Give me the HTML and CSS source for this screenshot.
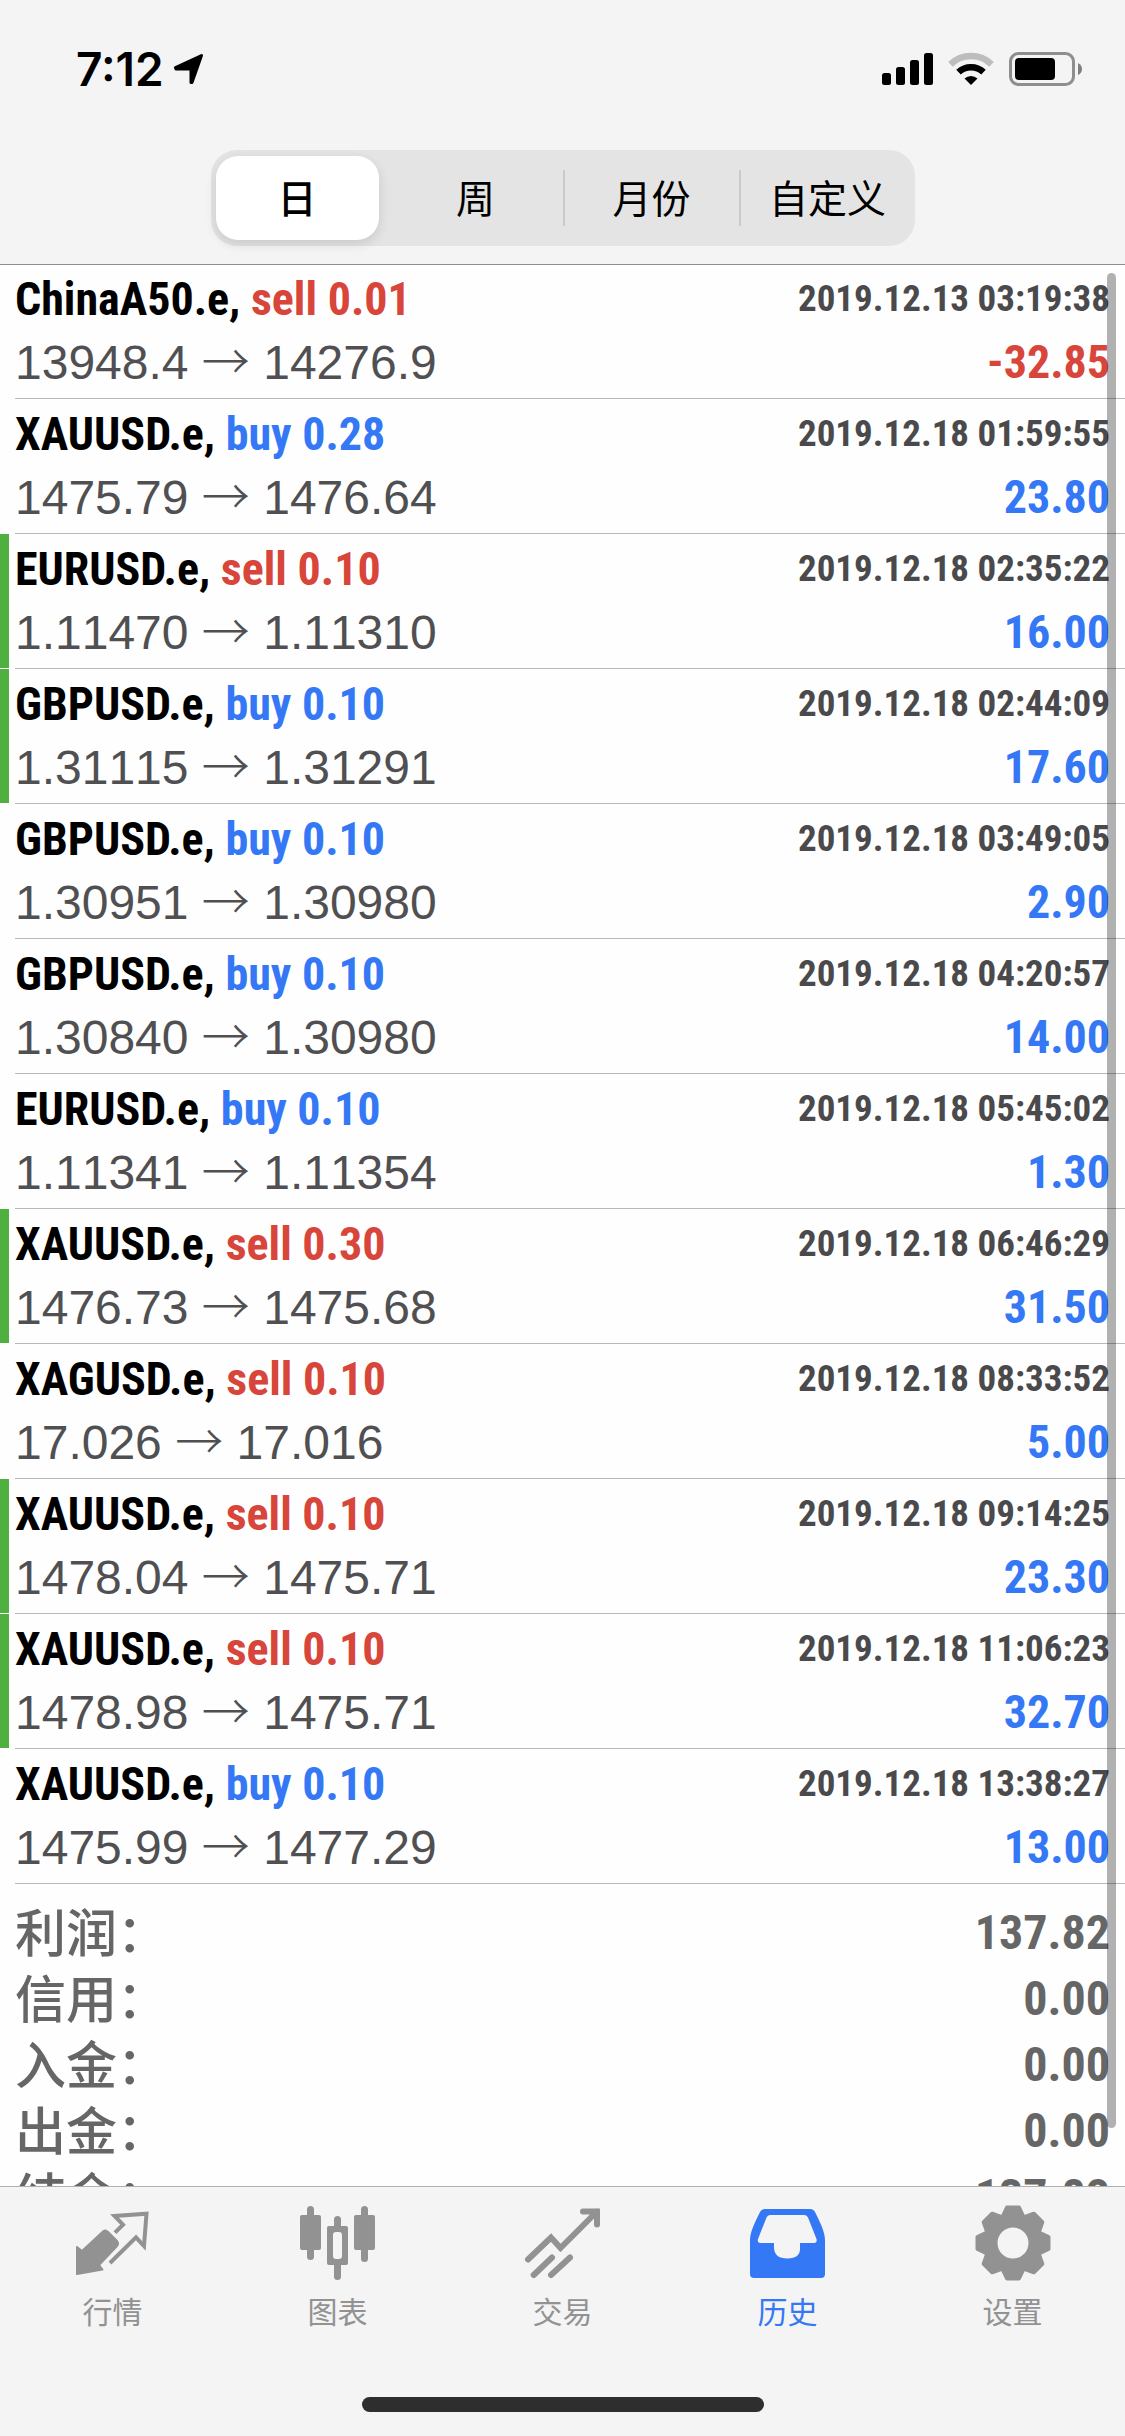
FILE: index.html
```
<!DOCTYPE html>
<html lang="zh-CN">
<head>
<meta charset="utf-8">
<meta name="viewport" content="width=device-width">
<title>历史</title>
<link rel="stylesheet" href="styles.css">
</head>
<body>
<header class="top">
  <div class="status">
    <div class="clock">
      <span>7:12</span>
      <svg width="30" height="32" viewBox="0 0 30 32" aria-hidden="true"><path d="M1.500 14.500 27.500 2.500 18 29.500H17V16H2Z" fill="#000" stroke="#000" stroke-width="3" stroke-linejoin="round"/></svg>
    </div>
    <svg width="201" height="34" viewBox="0 0 201 34" aria-hidden="true">
      <rect x="0" y="21" width="9" height="12" rx="2.500"/>
      <rect x="14" y="15" width="9" height="18" rx="2.500"/>
      <rect x="28" y="8" width="9" height="25" rx="2.500"/>
      <rect x="42" y="1" width="9" height="32" rx="2.500"/>
      <path d="M68.500 12.300A29.500 29.500 0 0 1 109.500 12.300" fill="none" stroke="#bdbdbd" stroke-width="6.500"/>
      <path d="M76.500 20.200A18 18 0 0 1 101.500 20.200" fill="none" stroke="#000" stroke-width="6.500"/>
      <path d="M82.500 26.500A9.500 9.500 0 0 1 95.500 26.500L89 33Z"/>
      <rect x="128.500" y="1.500" width="63" height="31" rx="8" fill="none" stroke="#8e8e8e" stroke-width="3"/>
      <rect x="133" y="6" width="40" height="22" rx="4"/>
      <path d="M196 11Q200 13 200 17T196 23Z" fill="#7f7f7f"/>
    </svg>
  </div>
  <nav class="segments" aria-label="周期">
    <button class="segment active" type="button">日</button>
    <button class="segment" type="button">周</button>
    <button class="segment" type="button">月份</button>
    <button class="segment" type="button">自定义</button>
  </nav>
</header>

<main class="history">
  <ul class="deals">
    <li class="deal"><div class="body"><h2>ChinaA50.e, <span class="red">sell 0.01</span></h2><time>2019.12.13 03:19:38</time><p>13948.4 <i>→</i> 14276.9</p><b class="red">-32.85</b></div></li>
    <li class="deal"><div class="body"><h2>XAUUSD.e, <span class="blue">buy 0.28</span></h2><time>2019.12.18 01:59:55</time><p>1475.79 <i>→</i> 1476.64</p><b class="blue">23.80</b></div></li>
    <li class="deal marked"><div class="body"><h2>EURUSD.e, <span class="red">sell 0.10</span></h2><time>2019.12.18 02:35:22</time><p>1.11470 <i>→</i> 1.11310</p><b class="blue">16.00</b></div></li>
    <li class="deal marked"><div class="body"><h2>GBPUSD.e, <span class="blue">buy 0.10</span></h2><time>2019.12.18 02:44:09</time><p>1.31115 <i>→</i> 1.31291</p><b class="blue">17.60</b></div></li>
    <li class="deal"><div class="body"><h2>GBPUSD.e, <span class="blue">buy 0.10</span></h2><time>2019.12.18 03:49:05</time><p>1.30951 <i>→</i> 1.30980</p><b class="blue">2.90</b></div></li>
    <li class="deal"><div class="body"><h2>GBPUSD.e, <span class="blue">buy 0.10</span></h2><time>2019.12.18 04:20:57</time><p>1.30840 <i>→</i> 1.30980</p><b class="blue">14.00</b></div></li>
    <li class="deal"><div class="body"><h2>EURUSD.e, <span class="blue">buy 0.10</span></h2><time>2019.12.18 05:45:02</time><p>1.11341 <i>→</i> 1.11354</p><b class="blue">1.30</b></div></li>
    <li class="deal marked"><div class="body"><h2>XAUUSD.e, <span class="red">sell 0.30</span></h2><time>2019.12.18 06:46:29</time><p>1476.73 <i>→</i> 1475.68</p><b class="blue">31.50</b></div></li>
    <li class="deal"><div class="body"><h2>XAGUSD.e, <span class="red">sell 0.10</span></h2><time>2019.12.18 08:33:52</time><p>17.026 <i>→</i> 17.016</p><b class="blue">5.00</b></div></li>
    <li class="deal marked"><div class="body"><h2>XAUUSD.e, <span class="red">sell 0.10</span></h2><time>2019.12.18 09:14:25</time><p>1478.04 <i>→</i> 1475.71</p><b class="blue">23.30</b></div></li>
    <li class="deal marked"><div class="body"><h2>XAUUSD.e, <span class="red">sell 0.10</span></h2><time>2019.12.18 11:06:23</time><p>1478.98 <i>→</i> 1475.71</p><b class="blue">32.70</b></div></li>
    <li class="deal"><div class="body"><h2>XAUUSD.e, <span class="blue">buy 0.10</span></h2><time>2019.12.18 13:38:27</time><p>1475.99 <i>→</i> 1477.29</p><b class="blue">13.00</b></div></li>
  </ul>
  <dl class="summary">
    <div><dt>利润：</dt><dd>137.82</dd></div>
    <div><dt>信用：</dt><dd>0.00</dd></div>
    <div><dt>入金：</dt><dd>0.00</dd></div>
    <div><dt>出金：</dt><dd>0.00</dd></div>
    <div><dt>结余：</dt><dd>137.82</dd></div>
  </dl>
  <div class="scrollbar"></div>
</main>

<footer class="bottom">
  <nav class="tabs">
    <a class="tab" href="#quotes">
      <svg width="80" height="80" viewBox="0 0 80 80" aria-hidden="true">
        <path d="M4 43 9 47 30 27.500Q32.500 25.500 35 28L44 37Q46 39.500 44 42L26 61 29.500 65.500 4 70Z" fill="currentColor" stroke="currentColor" stroke-width="2" stroke-linejoin="round"/>
        <path d="M42 28.700 50 20.700 41.500 12 73.500 9.700 71 42 63 33.300 37 59" fill="none" stroke="currentColor" stroke-width="4"/>
      </svg>
      <span>行情</span>
    </a>
    <a class="tab" href="#chart">
      <svg width="80" height="80" viewBox="0 0 80 80" aria-hidden="true">
        <g fill="currentColor">
          <rect x="2" y="11" width="21" height="35" rx="2"/><rect x="9" y="2" width="7" height="54" rx="3.500"/>
          <rect x="56" y="11" width="21" height="35" rx="2"/><rect x="63" y="2" width="7" height="56" rx="3.500"/>
          <path fill-rule="evenodd" d="M31 22H48Q50 22 50 24V59Q50 61 48 61H31Q29 61 29 59V24Q29 22 31 22ZM38 28Q35 28 35 31V52Q35 55 38 55H41Q44 55 44 52V31Q44 28 41 28Z"/>
          <path d="M36 24V15.500A3.500 3.500 0 0 1 43 15.500V24ZM36 60V72.500A3.500 3.500 0 0 0 43 72.500V60Z"/>
        </g>
      </svg>
      <span>图表</span>
    </a>
    <a class="tab" href="#trade">
      <svg width="80" height="80" viewBox="0 0 80 80" aria-hidden="true">
        <path d="M5 55.500 28 33.500 37.500 44 74 7.500M60 7.500H74V20.500M10.700 71 29 53.500M28 71 47 53.500" fill="none" stroke="currentColor" stroke-width="6" stroke-linecap="round"/>
      </svg>
      <span>交易</span>
    </a>
    <a class="tab current" href="#history">
      <svg width="80" height="80" viewBox="0 0 80 80" aria-hidden="true">
        <path fill="currentColor" fill-rule="evenodd" d="M17 5H62Q65.500 5 67 8C72 18 77 28 77 36V70Q77 74 73 74H6Q2 74 2 70V36C2 28 7 18 12 8Q13.500 5 17 5ZM22 11Q19.500 11 18.500 13.500L10 35Q9 39 12.500 39H26V43Q26 54.500 39.500 54.500T52 43V39H66Q69.500 39 68.500 35L60 13.500Q59 11 56.500 11Z"/>
      </svg>
      <span>历史</span>
    </a>
    <a class="tab" href="#settings">
      <svg width="80" height="80" viewBox="0 0 80 80" aria-hidden="true">
        <g transform="translate(40 39)" fill="currentColor" stroke="currentColor">
          <circle r="22.500" fill="none" stroke-width="14"/>
          <g stroke-width="4" stroke-linejoin="round">
            <path id="tooth" d="M-11 -25 -6 -35.500H6L11 -25Z"/>
            <use href="#tooth" transform="rotate(45)"/><use href="#tooth" transform="rotate(90)"/>
            <use href="#tooth" transform="rotate(135)"/><use href="#tooth" transform="rotate(180)"/>
            <use href="#tooth" transform="rotate(225)"/><use href="#tooth" transform="rotate(270)"/>
            <use href="#tooth" transform="rotate(315)"/>
          </g>
        </g>
      </svg>
      <span>设置</span>
    </a>
  </nav>
  <div class="home"></div>
</footer>
</body>
</html>
```
FILE: styles.css
```
* {
  box-sizing: border-box;
  margin: 0;
  padding: 0;
}

body {
  display: flex;
  flex-direction: column;
  height: 100vh;
  background: #fefefe;
  color: #000;
  font-family: "Liberation Sans", "Noto Sans CJK SC", sans-serif;
}

.top {
  position: relative;
  z-index: 1;
  padding-bottom: 18px;
  background: #f4f4f4;
  box-shadow: 0 1px #8c8c8c;
}

.status {
  display: flex;
  align-items: center;
  justify-content: space-between;
  height: 138px;
  margin-bottom: 12px;
  padding: 0 42px 0 76px;
}

.clock {
  display: flex;
  align-items: center;
  gap: 10px;
  font: 600 46px/48px Inter, sans-serif;
}

.segments {
  display: grid;
  grid-template-columns: repeat(4, 1fr);
  width: 704px;
  max-width: 100%;
  height: 96px;
  margin: 0 auto;
  border-radius: 26px;
  background: #e4e4e4;
}

.segment {
  margin: 20px 0;
  padding-bottom: 4px;
  border: 0;
  border-left: 2px solid #cacaca;
  background: none;
  color: #000;
  font: 400 39px/52px "Noto Sans CJK SC", sans-serif;
}

.segment.active {
  margin: 6px 8px 6px 5px;
  border: 0;
  border-radius: 22px;
  background: #fff;
  box-shadow: 0 4px 12px rgba(0, 0, 0, 0.12);
  font-weight: 500;
}

.segment.active + .segment {
  border-color: transparent;
}

.history {
  position: relative;
  flex: 1;
  min-height: 0;
  overflow: hidden;
}

.deals {
  list-style: none;
}

.deal {
  display: flex;
  gap: 6px;
}

.deal::before {
  content: "";
  width: 9px;
  margin-bottom: 1px;
}

.deal.marked::before {
  background: #50b03f;
}

.body {
  flex: 1;
  display: grid;
  grid-template-columns: 1fr auto;
  grid-template-rows: 70px 56px;
  padding: 0 15px 8px 0;
  border-bottom: 1px solid #b8b8b8;
}

.body h2,
.body time,
.body b {
  font-family: "Roboto Condensed", "Liberation Sans", sans-serif;
  font-weight: 700;
}

.body h2 {
  font-size: 46px;
  line-height: 70px;
}

.body time {
  color: #4a4a4d;
  font-size: 37px;
  line-height: 70px;
  text-align: right;
}

.body p {
  color: #505052;
  font-size: 48px;
  line-height: 56px;
  font-kerning: none;
}

.body i {
  font: 300 48px/48px "Noto Sans CJK SC", sans-serif;
}

.body b {
  font-size: 46px;
  line-height: 56px;
  text-align: right;
}

.body .red {
  color: #d8453a;
}

.body .blue {
  color: #3478f6;
}

.summary {
  padding: 16px 15px 0;
  color: #666;
}

.summary div {
  display: flex;
  justify-content: space-between;
  height: 66px;
}

.summary dt {
  font: 500 51px/60px "Noto Sans CJK SC", sans-serif;
}

.summary dd {
  font: 700 48px/66px "Roboto Condensed", "Liberation Sans", sans-serif;
}

.scrollbar {
  position: absolute;
  top: 9px;
  right: 9px;
  bottom: 58px;
  width: 9px;
  border-radius: 5px;
  background: rgba(0, 0, 0, 0.3);
}

.bottom {
  padding-bottom: 24px;
  border-top: 1px solid #b0b0b0;
  background: #f4f4f4;
}

.tabs {
  display: grid;
  grid-template-columns: repeat(5, 1fr);
  padding-top: 17px;
  margin-bottom: 67px;
}

.tab {
  display: flex;
  flex-direction: column;
  align-items: center;
  gap: 6px;
  color: #929292;
  font: 400 30px/40px "Noto Sans CJK SC", sans-serif;
  text-decoration: none;
}

.tab.current {
  color: #3478f6;
}

.home {
  width: 402px;
  height: 15px;
  margin: 0 auto;
  border-radius: 8px;
  background: #2e2e2e;
}
```
